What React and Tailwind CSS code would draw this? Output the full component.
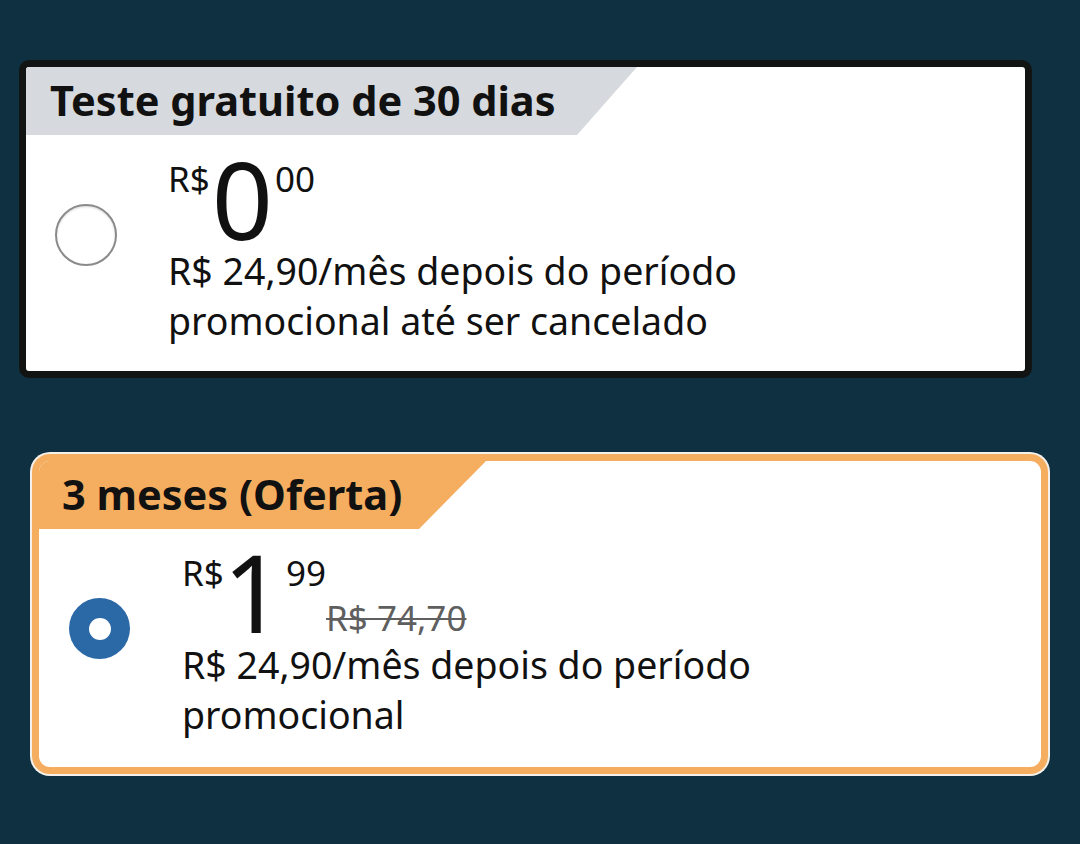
import React from "react";

const font = { fontFamily: '"Noto Sans", "Open Sans", sans-serif' };

const Radio = ({ checked }) =>
  checked ? (
    <div className="w-[61px] h-[61px] rounded-full bg-[#2a68a6] flex items-center justify-center">
      <div className="w-[22px] h-[22px] rounded-full bg-white" />
    </div>
  ) : (
    <div className="w-[62px] h-[62px] rounded-full border-2 border-[#8a8a8a] bg-white shadow-[inset_0_1px_2px_rgba(0,0,0,0.15)]" />
  );

const App = () => {
  return (
    <div
      className="w-[1080px] h-[844px] bg-[#0f3040] pt-[60px] flex flex-col"
      style={font}
    >
      {/* trial card */}
      <div className="ml-[19px] w-[1013px] h-[318px] border-[7px] border-[#121414] rounded-[10px] bg-white overflow-hidden">
        <div className="w-[611px] h-[68px] bg-[#d6d9dd] [clip-path:polygon(0_0,100%_0,calc(100%-60px)_100%,0_100%)] flex items-center pl-[24px]">
          <span className="text-[41.5px] font-bold text-[#111] leading-none">
            Teste gratuito de 30 dias
          </span>
        </div>
        <div className="flex items-start">
          <div className="w-[142px] pl-[29px] pt-[69px]">
            <Radio />
          </div>
          <div className="flex flex-col pt-[25px]">
            <div className="flex items-start text-[#111] h-[86px]">
              <span className="text-[35px] leading-none mt-[1px]">R$</span>
              <span className="text-[107px] leading-[76px] mx-[2px] mt-[1px]">0</span>
              <span className="text-[35px] leading-none mt-[1px]">00</span>
            </div>
            <div className="text-[37.5px] leading-[50px] text-[#111]">
              <div>R$ 24,90/mês depois do período</div>
              <div>promocional até ser cancelado</div>
            </div>
          </div>
        </div>
      </div>

      {/* offer card */}
      <div className="mt-[76px] ml-[32px] w-[1016px] h-[320px] border-[7px] border-[#f5ad5f] rounded-[18px] bg-white overflow-hidden shadow-[0_0_0_2px_#f4f1ec]">
        <div className="w-[447px] h-[68px] bg-[#f5ad5f] [clip-path:polygon(0_0,100%_0,calc(100%-67px)_100%,0_100%)] flex items-center pl-[23px]">
          <span className="text-[41.5px] font-bold text-[#111] leading-none">
            3 meses (Oferta)
          </span>
        </div>
        <div className="flex items-start">
          <div className="w-[143px] pl-[30px] pt-[69px]">
            <Radio checked />
          </div>
          <div className="flex flex-col pt-[25px]">
            <div className="flex items-start text-[#111] h-[86px]">
              <span className="text-[35px] leading-none mt-[1px]">R$</span>
              <span className="text-[107px] leading-[76px] -ml-[1px] mr-[2px]">1</span>
              <span className="text-[35px] leading-none mt-[1px]">99</span>
              <span className="text-[35px] leading-none mt-[46px] text-[#5f5f5f] line-through decoration-[2px]">
                R$ 74,70
              </span>
            </div>
            <div className="text-[37.5px] leading-[50px] text-[#111]">
              <div>R$ 24,90/mês depois do período</div>
              <div>promocional</div>
            </div>
          </div>
        </div>
      </div>
    </div>
  );
};

export default App;
